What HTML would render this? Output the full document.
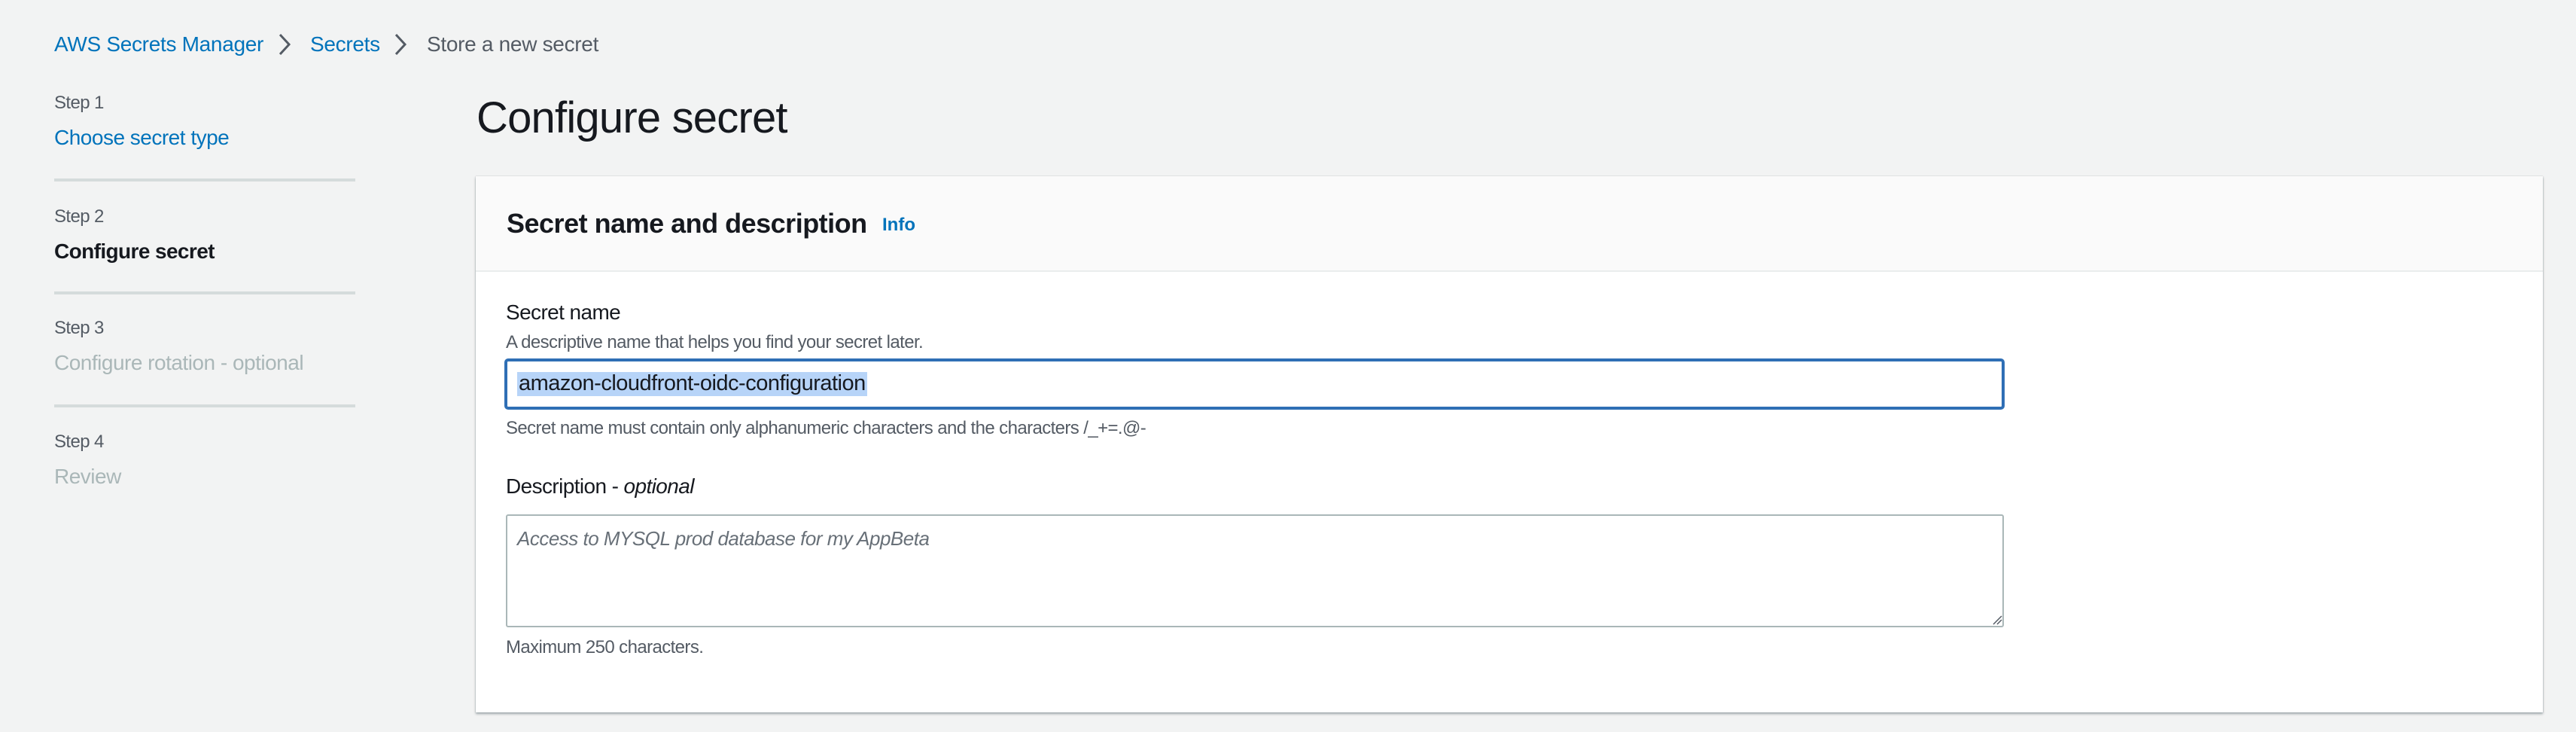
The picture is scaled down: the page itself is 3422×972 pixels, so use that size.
<!DOCTYPE html>
<html><head><meta charset="utf-8">
<style>
*{box-sizing:border-box;margin:0;padding:0}
html,body{width:3422px;height:972px;overflow:hidden;background:#f2f3f3;font-family:"Liberation Sans",sans-serif;color:#16191f}
.abs{position:absolute;white-space:nowrap;line-height:1}
.link{color:#0073bb}
.gray{color:#545b64}
.light{color:#aab7b8}
.div{position:absolute;left:72px;width:400px;height:4px;background:#d5dbdb}
.card{position:absolute;left:632px;top:234px;width:2746px;height:712px;background:#fff;box-shadow:0 2px 3px rgba(0,28,36,.35),0 0 1px rgba(0,28,36,.3)}
.hdr{position:absolute;left:0;top:0;width:100%;height:127px;background:#fafafa;border-bottom:2px solid #eaeded}
.t24{font-size:24px;letter-spacing:-0.6px}
</style></head><body>
<div class="abs link" style="left:72px;top:45px;font-size:28px;letter-spacing:-0.3px">AWS Secrets Manager</div>
<svg class="abs" style="left:367px;top:43px" width="22" height="32" viewBox="0 0 22 32"><path d="M5 3 L17 16 L5 29" fill="none" stroke="#545b64" stroke-width="3"/></svg>
<div class="abs link" style="left:412px;top:45px;font-size:28px;letter-spacing:-0.3px">Secrets</div>
<svg class="abs" style="left:521px;top:43px" width="22" height="32" viewBox="0 0 22 32"><path d="M5 3 L17 16 L5 29" fill="none" stroke="#545b64" stroke-width="3"/></svg>
<div class="abs gray" style="left:567px;top:45px;font-size:28px;letter-spacing:-0.3px">Store a new secret</div>

<div class="abs gray t24" style="left:72px;top:125px">Step 1</div>
<div class="abs link" style="left:72px;top:169px;font-size:28px;letter-spacing:-0.5px">Choose secret type</div>
<div class="div" style="top:237px"></div>
<div class="abs gray t24" style="left:72px;top:276px">Step 2</div>
<div class="abs" style="left:72px;top:320px;font-size:28px;font-weight:bold;letter-spacing:-0.6px">Configure secret</div>
<div class="div" style="top:387px"></div>
<div class="abs gray t24" style="left:72px;top:424px">Step 3</div>
<div class="abs light" style="left:72px;top:468px;font-size:28px;letter-spacing:-0.5px">Configure rotation - optional</div>
<div class="div" style="top:537px"></div>
<div class="abs gray t24" style="left:72px;top:575px">Step 4</div>
<div class="abs light" style="left:72px;top:619px;font-size:28px;letter-spacing:-0.5px">Review</div>

<div class="abs" style="left:633px;top:128px;font-size:58px;letter-spacing:-0.8px">Configure secret</div>

<div class="card">
 <div class="hdr"></div>
 <div class="abs" style="left:41px;top:45px;font-size:36px;font-weight:bold;letter-spacing:-0.5px">Secret name and description</div>
 <div class="abs link" style="left:540px;top:53px;font-size:24px;font-weight:bold">Info</div>

 <div class="abs" style="left:40px;top:167px;font-size:28px;letter-spacing:-0.6px">Secret name</div>
 <div class="abs gray t24" style="left:40px;top:209px">A descriptive name that helps you find your secret later.</div>
 <div class="abs" style="left:38px;top:242px;width:1993px;height:68px;border:4px solid #2f6fb5;border-radius:5px"></div>
 <div class="abs" style="left:55px;top:260px;height:32px;padding:1px 2px;background:#b7d4f8;font-size:29px;letter-spacing:-0.5px">amazon-cloudfront-oidc-configuration</div>
 <div class="abs gray t24" style="left:40px;top:323px">Secret name must contain only alphanumeric characters and the characters /_+=.@-</div>

 <div class="abs" style="left:40px;top:398px;font-size:28px;letter-spacing:-0.6px">Description - <i>optional</i></div>
 <div class="abs" style="left:40px;top:449px;width:1990px;height:150px;border:2px solid #aab7b8;border-radius:3px"></div>
 <div class="abs gray" style="left:55px;top:468px;font-size:26px;font-style:italic;letter-spacing:-0.5px;color:#687078">Access to MYSQL prod database for my AppBeta</div>
 <svg class="abs" style="left:2014px;top:582px" width="14" height="14" viewBox="0 0 14 14"><path d="M2 13 L13 2 M7 13 L13 7" stroke="#545b64" stroke-width="1.5"/></svg>
 <div class="abs gray t24" style="left:40px;top:614px">Maximum 250 characters.</div>
</div>
</body></html>
